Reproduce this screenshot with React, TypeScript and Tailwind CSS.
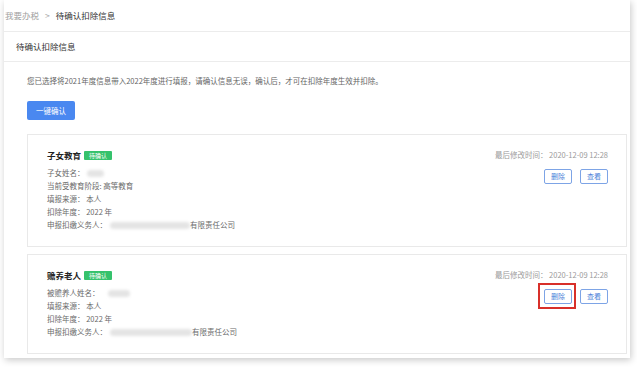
const FONT = { fontFamily: '"Noto Sans CJK SC", "Noto Sans", sans-serif' };

function Blur({ w }: { w: number }) {
  return <span className="inline-block h-[7px] rounded-full bg-[#e4e4e4] blur-[1.5px] align-middle" style={{ width: w }} />;
}

function Row({ children }: { children: React.ReactNode }) {
  return <div className="flex h-[13px] items-center whitespace-nowrap text-[7.5px] text-[#6a6a6a]">{children}</div>;
}

function Card({
  title,
  rows,
  highlight,
}: {
  title: string;
  rows: React.ReactNode[];
  highlight?: boolean;
}) {
  return (
    <div className="flex justify-between border border-[#e9e9e9] pl-[19px] pr-[18px] pt-[14px] pb-[15px]">
      <div>
        <div className="flex h-[12px] items-center gap-[3px]">
          <span className="text-[8.5px] font-bold text-[#222]">{title}</span>
          <span className="flex h-[9px] w-[28px] items-center justify-center rounded-[1px] bg-[#35c26c] text-[6px] text-white">
            待确认
          </span>
        </div>
        <div className="mt-[5px]">
          {rows.map((r, i) => (
            <Row key={i}>{r}</Row>
          ))}
        </div>
      </div>
      <div className="flex flex-col items-end">
        <div className="flex h-[12px] items-center whitespace-nowrap text-[7.5px] text-[#9a9a9a]">
          最后修改时间：&nbsp;2020-12-09 12:28
        </div>
        <div className="mt-[8px] flex gap-[8px]">
          <div className={highlight ? "relative" : ""}>
            <button className="flex h-[15px] w-[28px] items-center justify-center rounded-[2px] border border-[#7da4e6] bg-white text-[7px] text-[#4b7fd9]">
              删除
            </button>
            {highlight && (
              <div className="absolute -left-[6px] -top-[6px] h-[26px] w-[38px] border-2 border-[#d8302a]" />
            )}
          </div>
          <button className="flex h-[15px] w-[28px] items-center justify-center rounded-[2px] border border-[#7da4e6] bg-white text-[7px] text-[#4b7fd9]">
            查看
          </button>
        </div>
      </div>
    </div>
  );
}

export default function App() {
  return (
    <div className="h-[367px] w-[637px] overflow-hidden bg-white pb-[9px] pl-[4px] pr-[7px]" style={FONT}>
      <div className="flex h-full flex-col bg-white shadow-[1px_2px_7px_rgba(0,0,0,0.22)]">
        {/* 面包屑 */}
        <div className="flex h-[32px] shrink-0 items-center gap-[6px] border-b border-[#ececec] pl-[1px] text-[8.5px]">
          <span className="text-[#a0a0a0]">我要办税</span>
          <span className="text-[#aaa]">&gt;</span>
          <span className="text-[#333]">待确认扣除信息</span>
        </div>

        {/* 标题 */}
        <div className="flex h-[30px] shrink-0 items-center border-b border-[#ececec] pl-[12px] text-[8.5px] text-[#333]">
          待确认扣除信息
        </div>

        {/* 内容 */}
        <div className="flex flex-col pl-[23px] pr-[3px] pt-[14px]">
          <p className="h-[10px] whitespace-nowrap text-[7.5px] leading-[10px] text-[#666]">
            您已选择将2021年度信息带入2022年度进行填报，请确认信息无误，确认后，才可在扣除年度生效并扣除。
          </p>
          <button className="mt-[15px] flex h-[19px] w-[48px] items-center justify-center rounded-[2px] bg-[#4a88f0] text-[7.5px] text-white">
            一键确认
          </button>

          <div className="mt-[14px] flex flex-col gap-[7px]">
            <Card
              title="子女教育"
              rows={[
                <>
                  子女姓名：<span className="ml-[2px]"><Blur w={17} /></span>
                </>,
                <>当前受教育阶段: 高等教育</>,
                <>填报来源：&nbsp;本人</>,
                <>扣除年度：&nbsp;2022 年</>,
                <>
                  申报扣缴义务人：<span className="ml-[3px]"><Blur w={80} /></span>有限责任公司
                </>,
              ]}
            />
            <Card
              title="赡养老人"
              highlight
              rows={[
                <>
                  被赡养人姓名：<span className="ml-[8px]"><Blur w={22} /></span>
                </>,
                <>填报来源：&nbsp;本人</>,
                <>扣除年度：&nbsp;2022 年</>,
                <>
                  申报扣缴义务人：<span className="ml-[3px]"><Blur w={82} /></span>有限责任公司
                </>,
              ]}
            />
          </div>
        </div>
      </div>
    </div>
  );
}
